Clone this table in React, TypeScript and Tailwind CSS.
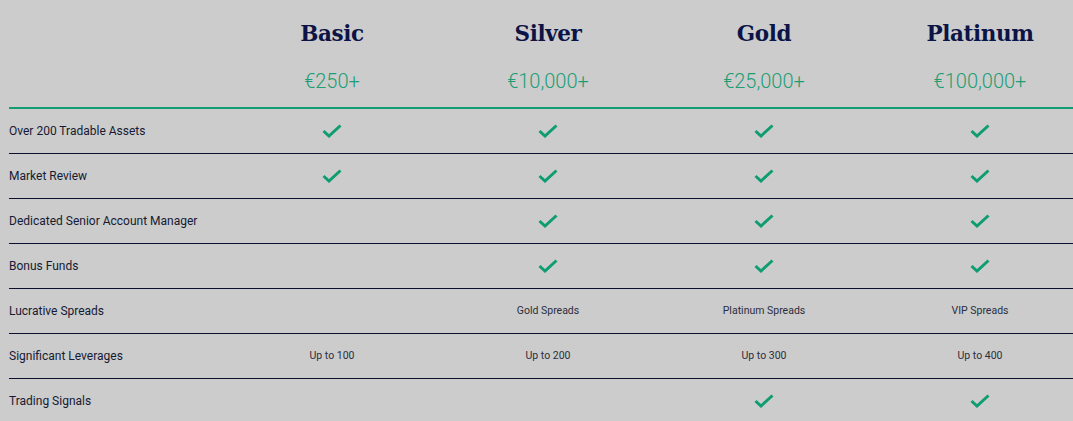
const plans = [
  { name: 'Basic', price: '€250+' },
  { name: 'Silver', price: '€10,000+' },
  { name: 'Gold', price: '€25,000+' },
  { name: 'Platinum', price: '€100,000+' },
]

type Cell = boolean | string

const rows: { label: string; cells: Cell[] }[] = [
  { label: 'Over 200 Tradable Assets', cells: [true, true, true, true] },
  { label: 'Market Review', cells: [true, true, true, true] },
  { label: 'Dedicated Senior Account Manager', cells: [false, true, true, true] },
  { label: 'Bonus Funds', cells: [false, true, true, true] },
  { label: 'Lucrative Spreads', cells: [false, 'Gold Spreads', 'Platinum Spreads', 'VIP Spreads'] },
  { label: 'Significant Leverages', cells: ['Up to 100', 'Up to 200', 'Up to 300', 'Up to 400'] },
  { label: 'Trading Signals', cells: [false, false, true, true] },
]

const Check = () => (
  <svg width="20" height="14" viewBox="0 0 20 14" fill="none">
    <path d="M1.5 7 L7 12 L18.5 1.5" stroke="#0e9d70" strokeWidth="3" strokeLinecap="butt" strokeLinejoin="miter" />
  </svg>
)

const gridCols = 'grid grid-cols-[215px_216px_216px_216px_216px]'

export default function App() {
  return (
    <div className="w-full min-h-[421px] bg-[#cccccc] overflow-hidden font-['Roboto',sans-serif]">
      <div className="w-[1089px] pl-[9px]">
        <div className={`${gridCols} h-[109px] border-b-2 border-[#119c72]`}>
          <div />
          {plans.map((p) => (
            <div key={p.name} className="flex flex-col items-center">
              <h3 className="mt-[19px] h-[30px] text-[21.5px] leading-[30px] font-bold text-[#0c1447] font-['DejaVu_Serif',serif] tracking-[-0.4px]">
                {p.name}
              </h3>
              <p className="mt-[17px] text-[20px] leading-[30px] font-light text-[#1d9e74]">{p.price}</p>
            </div>
          ))}
        </div>
        {rows.map((r) => (
          <div key={r.label} className={`${gridCols} h-[45px] border-b border-[#0b1030] items-center`}>
            <div className="text-[12px] text-[#161a33]">{r.label}</div>
            {r.cells.map((c, i) => (
              <div key={i} className="flex justify-center items-center">
                {c === true ? <Check /> : c ? <span className="text-[10.5px] text-[#2a2e40]">{c}</span> : null}
              </div>
            ))}
          </div>
        ))}
      </div>
    </div>
  )
}
